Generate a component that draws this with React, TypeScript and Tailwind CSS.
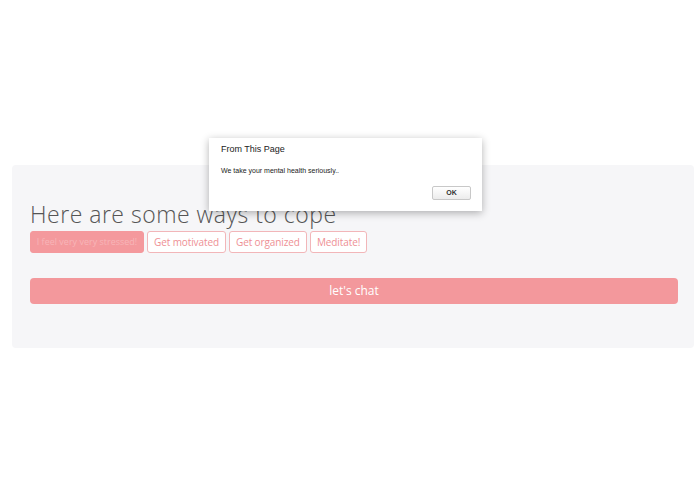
import React from "react";

const ways = ["Get motivated", "Get organized", "Meditate!"];

export default function App() {
  return (
    <div className="relative w-[695px] h-[494px] bg-white overflow-hidden" style={{ fontFamily: '"Open Sans", "Liberation Sans", sans-serif' }}>
      <div className="pt-[165px] pl-[12px]">
        <div className="w-[682px] h-[183px] rounded-[4px] bg-[#f6f6f8] pl-[18px] pr-[16px] pt-[36px]">
          <h1 className="text-[23px] leading-[27px] text-[#555] font-light tracking-[0.5px]">
            Here are some ways to cope
          </h1>
          <div className="flex gap-[3px] mt-[3px]">
            <button className="h-[22px] w-[114px] rounded-[3px] bg-[#f4999d] text-[9px] text-[#f7b5b8] border border-[#f4999d] flex items-center justify-center whitespace-nowrap">
              I feel very very stressed!
            </button>
            {ways.map((w) => (
              <button
                key={w}
                className="h-[22px] px-[6px] rounded-[3px] bg-white border border-[#f2b6b9] text-[10px] tracking-[-0.1px] text-[#ee8f94]"
              >
                {w}
              </button>
            ))}
          </div>
          <button className="mt-[25px] w-[648px] h-[26px] rounded-[4px] bg-[#f3989c] text-white text-[12px]">
            let's chat
          </button>
        </div>
      </div>

      {/* alert dialog */}
      <div
        className="absolute left-[209px] top-[138px] w-[273px] h-[73px] bg-white shadow-[0_2px_8px_rgba(0,0,0,0.3)] px-[12px] pt-[5px]"
        style={{ fontFamily: '"Liberation Sans", Arial, sans-serif' }}
      >
        <div className="text-[9px] text-[#222]">From This Page</div>
        <div className="mt-[9px] text-[7px] text-[#222]">We take your mental health seriously..</div>
        <div className="flex justify-end mt-[10px]">
          <button className="w-[39px] h-[14px] rounded-[2px] border border-[#c8c8c8] bg-gradient-to-b from-white to-[#ececec] text-[7px] font-bold text-[#333] mr-[-1px]">
            OK
          </button>
        </div>
      </div>
    </div>
  );
}
